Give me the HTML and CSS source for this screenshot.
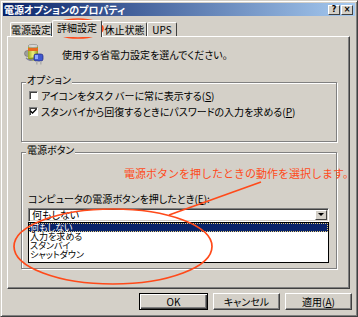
FILE: index.html
```html
<!DOCTYPE html>
<html lang="ja">
<head>
    <meta charset="UTF-8">
    <title>電源オプションのプロパティ</title>
    <link rel="stylesheet" href="styles.css">
</head>
<body>
<div class="window">
    <div class="titlebar">
        <span class="title">電源オプションのプロパティ</span>
        <div class="caption-btns">
            <span class="cap-btn">?</span>
            <span class="cap-btn">×</span>
        </div>
    </div>

    <div class="dialog-body">
        <div class="tabs">
            <div class="tab tab-first">電源設定</div>
            <div class="tab tab-active">詳細設定</div>
            <div class="tab tab-third">休止状態</div>
            <div class="tab tab-last">UPS</div>
        </div>

        <div class="panel">
            <div class="intro">
                <svg class="power-icon" width="22" height="22" viewBox="0 0 22 22">
                    <defs>
                        <linearGradient id="batt" x1="0" x2="1" y1="0" y2="0">
                            <stop offset="0" stop-color="#9aa820"/>
                            <stop offset="0.5" stop-color="#eef080"/>
                            <stop offset="1" stop-color="#8c9a18"/>
                        </linearGradient>
                    </defs>
                    <circle cx="3.5" cy="10.5" r="3" fill="#9c9c9c" stroke="#707070" stroke-width="0.6"/>
                    <rect x="4" y="3" width="10" height="13" fill="url(#batt)"/>
                    <rect x="4" y="5" width="10" height="3" fill="#e86a20"/>
                    <ellipse cx="9" cy="3" rx="5" ry="1.6" fill="#d8d8d8" stroke="#808080" stroke-width="0.6"/>
                    <ellipse cx="9" cy="16" rx="5" ry="1.6" fill="#8c9a18"/>
                    <path d="M2 15 C5 18 8 18 11 15" stroke="#8080a0" stroke-width="1.2" fill="none"/>
                    <rect x="10" y="11" width="9" height="7" rx="2" fill="#4058d0" stroke="#202880" stroke-width="0.7"/>
                    <rect x="11" y="12" width="3" height="4" fill="#90a8ff"/>
                    <rect x="12" y="18" width="1.6" height="3.5" fill="#b0b0b0"/>
                    <rect x="16" y="18" width="1.6" height="3.5" fill="#b0b0b0"/>
                </svg>
                <span>使用する省電力設定を選んでください。</span>
            </div>

            <div class="group group-options">
                <span class="group-title">オプション</span>
                <div class="check-row">
                    <span class="checkbox"></span>
                    <span>アイコンをタスク バーに常に表示する(<u>S</u>)</span>
                </div>
                <div class="check-row">
                    <span class="checkbox checked">
                        <svg width="7" height="7" viewBox="0 0 7 7"><path d="M0.5 3 L2.5 5 L6.5 1" stroke="#000" stroke-width="1.3" fill="none"/></svg>
                    </span>
                    <span>スタンバイから回復するときにパスワードの入力を求める(<u>P</u>)</span>
                </div>
            </div>

            <div class="group group-power">
                <span class="group-title">電源ボタン</span>
                <div class="field-label">コンピュータの電源ボタンを押したとき(<u>E</u>):</div>
                <div class="combo">
                    <span class="combo-value">何もしない</span>
                    <span class="combo-arrow"></span>
                </div>
                <ul class="combo-list">
                    <li class="selected">何もしない</li>
                    <li>入力を求める</li>
                    <li>スタンバイ</li>
                    <li>シャットダウン</li>
                </ul>
            </div>
        </div>

        <div class="buttons">
            <button class="btn btn-default">OK</button>
            <button class="btn">キャンセル</button>
            <button class="btn">適用(<u>A</u>)</button>
        </div>
    </div>

    <div class="note">電源ボタンを押したときの動作を選択します。</div>
    <svg class="marks" width="358" height="317" viewBox="0 0 358 317">
        <ellipse cx="77" cy="27.5" rx="25" ry="9.5" fill="none" stroke="#ff4a1a" stroke-width="1.7"/>
        <ellipse cx="112" cy="245.5" rx="99" ry="37.5" fill="none" stroke="#ff4a1a" stroke-width="1.7"/>
        <line x1="260" y1="181" x2="168" y2="214" stroke="#ff4a1a" stroke-width="1.7"/>
    </svg>
</div>
</body>
</html>
```

FILE: styles.css
```css
body {
    margin: 0;
    font-family: "Noto Sans CJK JP", sans-serif;
    font-size: 10px;
    font-feature-settings: "palt";
    color: #000;
    background: #d4d0c8;
}

.window {
    position: relative;
    width: 358px;
    height: 317px;
    box-sizing: border-box;
    padding: 2px;
    background: #d4d0c8;
    border: 1px solid;
    border-color: #d4d0c8 #404040 #404040 #d4d0c8;
    box-shadow: inset 1px 1px #fff, inset -1px -1px #808080;
}


.titlebar {
    height: 13px;
    display: flex;
    justify-content: space-between;
    align-items: center;
    padding: 0 2px 0 1px;
    background: linear-gradient(to right, #0a246a, #a6caf0);
}

.title {
    color: #fff;
    font-weight: bold;
    line-height: 13px;
}

.caption-btns {
    display: flex;
    gap: 1px;
}

.cap-btn {
    width: 12px;
    height: 10px;
    box-sizing: border-box;
    background: #d4d0c8;
    border: 1px solid;
    border-color: #fff #404040 #404040 #fff;
    font-family: "DejaVu Sans", sans-serif;
    font-size: 8px;
    font-weight: bold;
    line-height: 8px;
    text-align: center;
}


.dialog-body {
    padding: 4px 5px 0 4px;
}

.tabs {
    display: flex;
    align-items: flex-end;
    height: 16px;
    padding-left: 3px;
}

.tab {
    position: relative;
    height: 14px;
    box-sizing: border-box;
    border: 1px solid;
    border-bottom: none;
    border-color: #fff #404040 #fff #fff;
    border-radius: 2px 2px 0 0;
    text-align: center;
    line-height: 13px;
}

.tab-first { width: 42px; }
.tab-third { width: 45px; }
.tab-last { width: 30px; }

.tab-active {
    width: 50px;
    height: 17px;
    margin-bottom: -1px;
    background: #d4d0c8;
    z-index: 1;
    line-height: 14px;
}


.panel {
    height: 253px;
    box-sizing: border-box;
    border: 1px solid;
    border-color: #fff #404040 #404040 #fff;
    box-shadow: inset -1px -1px #808080;
}

.intro {
    display: flex;
    align-items: center;
    gap: 16px;
    margin: 6px 0 0 16px;
    height: 22px;
}

.group {
    display: flex;
    flex-direction: column;
    align-items: flex-start;
    width: 316px;
    box-sizing: border-box;
    margin-left: 13px;
    border: 1px solid #808080;
    box-shadow: inset 1px 1px #fff, 1px 1px #fff;
}

.group-options {
    height: 60px;
    margin-top: 17px;
    padding-left: 7px;
}

.group-power {
    height: 117px;
    margin-top: 10px;
    padding-left: 6px;
}

.group-title {
    margin: -8px 0 0 -3px;
    padding: 0 1px;
    height: 10px;
    line-height: 10px;
    background: #d4d0c8;
}

.group-power .group-title {
    margin-left: -2px;
}

.check-row {
    display: flex;
    align-items: center;
    gap: 3px;
    height: 12px;
    margin-top: 4px;
}

.checkbox {
    display: flex;
    align-items: center;
    justify-content: center;
    width: 9px;
    height: 9px;
    box-sizing: border-box;
    background: #fff;
    border: 1px solid;
    border-color: #808080 #fff #fff #808080;
    box-shadow: inset 1px 1px #404040;
}


.field-label {
    margin-top: 39px;
    line-height: 10px;
}

.combo {
    display: flex;
    justify-content: space-between;
    align-items: center;
    width: 301px;
    height: 14px;
    box-sizing: border-box;
    margin-top: 4px;
    background: #fff;
    border: 1px solid;
    border-color: #808080 #fff #fff #808080;
    box-shadow: inset 1px 1px #404040, inset -1px -1px #d4d0c8;
    padding: 1px 1px 1px 3px;
}

.combo-value {
    line-height: 10px;
}

.combo-arrow {
    position: relative;
    width: 12px;
    height: 10px;
    box-sizing: border-box;
    background: #d4d0c8;
    border: 1px solid;
    border-color: #fff #404040 #404040 #fff;
}

.combo-arrow::after {
    content: "";
    position: absolute;
    left: 2px;
    top: 2px;
    border-left: 3px solid transparent;
    border-right: 3px solid transparent;
    border-top: 3px solid #000;
}

.combo-list {
    list-style: none;
    margin: 0;
    padding: 0;
    width: 301px;
    height: 41px;
    box-sizing: border-box;
    background: #fff;
    border: 1px solid #000;
    font-size: 9px;
}

.combo-list li {
    height: 9px;
    line-height: 9px;
    padding-left: 1px;
}

.combo-list li.selected {
    background: #0a246a;
    color: #fff;
    outline: 1px dotted #e8d080;
    outline-offset: -1px;
}


.buttons {
    display: flex;
    justify-content: flex-end;
    gap: 5px;
    margin: 4px -2px 0 0;
}

.btn {
    width: 67px;
    height: 17px;
    box-sizing: border-box;
    padding: 0;
    font: inherit;
    font-feature-settings: "palt";
    background: #d4d0c8;
    border: 1px solid;
    border-color: #fff #404040 #404040 #fff;
    box-shadow: inset -1px -1px #808080;
    line-height: 14px;
}

.btn-default {
    width: 69px;
    border: 1px solid #000;
    box-shadow: inset 1px 1px #fff, inset -1px -1px #404040, inset -2px -2px #808080;
}


.note {
    position: absolute;
    left: 123px;
    top: 165px;
    font-size: 11px;
    font-feature-settings: normal;
    line-height: 14px;
    color: #ff4a1a;
    white-space: nowrap;
}

.marks {
    position: absolute;
    left: 0;
    top: 0;
    pointer-events: none;
}
```
